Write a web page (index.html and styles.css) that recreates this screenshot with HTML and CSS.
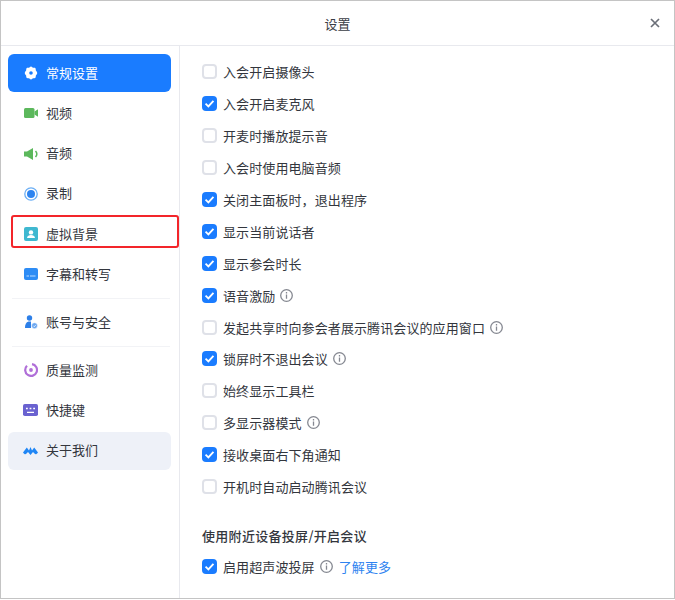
FILE: index.html
```html
<!DOCTYPE html>
<html lang="zh">
<head>
<meta charset="utf-8">
<title>设置</title>
<link rel="stylesheet" href="styles.css">
</head>
<body>
<div class="window">
  <header class="titlebar">
    <span class="title">设置</span>
    <svg class="close" viewBox="0 0 10 10" width="10" height="10"><path d="M1 1L9 9M9 1L1 9" stroke="#6b6f78" stroke-width="1.7" fill="none"/></svg>
  </header>
  <div class="main">
    <nav class="sidebar">
      <div class="nav active">
        <svg class="ico" viewBox="0 0 14 14"><path fill="#fff" fill-rule="evenodd" d="M7 .6c1 0 1.300 1 2 1.200.8.200 1.800-.3 2.400.4.600.6.200 1.500.5 2.200.3.700 1.300 1.100 1.300 2.600s-1 1.900-1.300 2.600c-.3.700.1 1.600-.5 2.200-.6.700-1.600.2-2.400.4-.7.200-1 1.200-2 1.200s-1.300-1-2-1.200c-.8-.2-1.800.3-2.400-.4-.6-.6-.2-1.500-.5-2.200C1.800 8.900.8 8.500.8 7s1-1.900 1.300-2.600c.3-.7-.1-1.600.5-2.200.6-.7 1.600-.2 2.400-.4.700-.2 1-1.200 2-1.200zM7 5.200a1.800 1.800 0 100 3.600 1.800 1.800 0 000-3.600z"/></svg>
        <span>常规设置</span>
      </div>
      <div class="nav">
        <svg class="ico" viewBox="0 0 14 14"><rect x="0" y="2" width="10.500" height="10" rx="1.500" fill="#5cb85c"/><path d="M10.500 5.500L14 3.200v7.600L10.500 8.500z" fill="#5cb85c"/></svg>
        <span>视频</span>
      </div>
      <div class="nav">
        <svg class="ico" viewBox="0 0 14 14"><path d="M0 4.500h3L9 1v12L3 9.500H0z" fill="#5cb85c"/><path d="M11.500 4a4.500 4.500 0 010 6" stroke="#5cb85c" stroke-width="1.500" fill="none"/></svg>
        <span>音频</span>
      </div>
      <div class="nav">
        <svg class="ico" viewBox="0 0 14 14"><circle cx="7" cy="7" r="6.200" fill="none" stroke="#6aaef5" stroke-width="1.300"/><circle cx="7" cy="7" r="4" fill="#2d84f0"/></svg>
        <span>录制</span>
      </div>
      <div class="nav marked">
        <svg class="ico" viewBox="0 0 14 14"><rect width="14" height="14" rx="2" fill="#3fb8d0"/><circle cx="7" cy="5.400" r="2.200" fill="#fff"/><path d="M3 11c.3-2.200 2-3 4-3s3.700.8 4 3z" fill="#fff"/></svg>
        <span>虚拟背景</span>
      </div>
      <div class="nav">
        <svg class="ico" viewBox="0 0 14 14"><rect y="1" width="14" height="12" rx="2" fill="#2d8cf5"/><path d="M2.500 9h2.500M6 9h5.500" stroke="#bcdcff" stroke-width="1.200"/></svg>
        <span>字幕和转写</span>
      </div>
      <div class="divider"></div>
      <div class="nav">
        <svg class="ico" viewBox="0 0 14 14"><circle cx="5.500" cy="3" r="2.700" fill="#2d7fe8"/><path d="M1 13c0-3.500 1-6 3.500-6.500h2.500V13z" fill="#2d7fe8"/><circle cx="10.500" cy="10.700" r="3" fill="#6aa6f0" stroke="#fff" stroke-width=".6"/><path d="M9.300 10.700l1 1 1.400-1.600" stroke="#fff" stroke-width=".8" fill="none"/></svg>
        <span>账号与安全</span>
      </div>
      <div class="divider"></div>
      <div class="nav">
        <svg class="ico" viewBox="0 0 14 14"><path d="M8 1.200A5.900 5.900 0 113 2.800" fill="none" stroke="#b06fd8" stroke-width="2.200"/><circle cx="7" cy="7" r="1.900" fill="#b06fd8"/></svg>
        <span>质量监测</span>
      </div>
      <div class="nav">
        <svg class="ico wide" viewBox="0 0 15 12"><rect width="15" height="12" rx="1.800" fill="#6a62d0"/><path d="M3 4.500h1.800M6.600 4.500h1.800M10.200 4.500h1.800M4 8.300h7" stroke="#fff" stroke-width="1.300"/></svg>
        <span>快捷键</span>
      </div>
      <div class="nav about">
        <svg class="ico wide" viewBox="0 0 15 12"><path d="M0 7.500L3.800 2.500 6 5.500 7.500 2 9 5.500 11.200 2.500 15 7.500C13.500 9.500 12.500 9.800 11.500 8.500L10 7 7.500 10 5 7 3.500 8.500C2.500 9.800 1.500 9.500 0 7.500z" fill="#1f86f5"/></svg>
        <span>关于我们</span>
      </div>
    </nav>
    <section class="content">
      <label class="row"><i class="box"></i><span>入会开启摄像头</span></label>
      <label class="row"><i class="box on"><svg viewBox="0 0 16 16"><path d="M3.800 8.200l3 2.800 5.400-5.800"/></svg></i><span>入会开启麦克风</span></label>
      <label class="row"><i class="box"></i><span>开麦时播放提示音</span></label>
      <label class="row"><i class="box"></i><span>入会时使用电脑音频</span></label>
      <label class="row"><i class="box on"><svg viewBox="0 0 16 16"><path d="M3.800 8.200l3 2.800 5.400-5.800"/></svg></i><span>关闭主面板时，退出程序</span></label>
      <label class="row"><i class="box on"><svg viewBox="0 0 16 16"><path d="M3.800 8.200l3 2.800 5.400-5.800"/></svg></i><span>显示当前说话者</span></label>
      <label class="row"><i class="box on"><svg viewBox="0 0 16 16"><path d="M3.800 8.200l3 2.800 5.400-5.800"/></svg></i><span>显示参会时长</span></label>
      <label class="row"><i class="box on"><svg viewBox="0 0 16 16"><path d="M3.800 8.200l3 2.800 5.400-5.800"/></svg></i><span>语音激励</span><svg class="info" viewBox="0 0 13 13"><circle cx="6.500" cy="6.500" r="5.800"/><path d="M6.500 5.500v4.200M6.500 3v1.400"/></svg></label>
      <label class="row"><i class="box"></i><span>发起共享时向参会者展示腾讯会议的应用窗口</span><svg class="info" viewBox="0 0 13 13"><circle cx="6.500" cy="6.500" r="5.800"/><path d="M6.500 5.500v4.200M6.500 3v1.400"/></svg></label>
      <label class="row"><i class="box on"><svg viewBox="0 0 16 16"><path d="M3.800 8.200l3 2.800 5.400-5.800"/></svg></i><span>锁屏时不退出会议</span><svg class="info" viewBox="0 0 13 13"><circle cx="6.500" cy="6.500" r="5.800"/><path d="M6.500 5.500v4.200M6.500 3v1.400"/></svg></label>
      <label class="row"><i class="box"></i><span>始终显示工具栏</span></label>
      <label class="row"><i class="box"></i><span>多显示器模式</span><svg class="info" viewBox="0 0 13 13"><circle cx="6.500" cy="6.500" r="5.800"/><path d="M6.500 5.500v4.200M6.500 3v1.400"/></svg></label>
      <label class="row"><i class="box on"><svg viewBox="0 0 16 16"><path d="M3.800 8.200l3 2.800 5.400-5.800"/></svg></i><span>接收桌面右下角通知</span></label>
      <label class="row"><i class="box"></i><span>开机时自动启动腾讯会议</span></label>
      <h2 class="heading">使用附近设备投屏/开启会议</h2>
      <label class="row"><i class="box on"><svg viewBox="0 0 16 16"><path d="M3.800 8.200l3 2.800 5.400-5.800"/></svg></i><span>启用超声波投屏</span><svg class="info" viewBox="0 0 13 13"><circle cx="6.500" cy="6.500" r="5.800"/><path d="M6.500 5.500v4.200M6.500 3v1.400"/></svg><a class="more">了解更多</a></label>
    </section>
  </div>
</div>
</body>
</html>
```
FILE: styles.css
```css
*, *::after { box-sizing: border-box; }
html, body { margin: 0; padding: 0; background: #fff; }
body {
  width: 675px;
  height: 600px;
  overflow: hidden;
  font-family: "Noto Sans CJK SC", "Liberation Sans", sans-serif;
  font-size: 13px;
  color: #33363d;
}
.window {
  width: 675px;
  height: 599px;
  border: 1px solid #c4c4c4;
  display: flex;
  flex-direction: column;
  background: #fff;
}
.titlebar {
  height: 45px;
  flex: none;
  border-bottom: 1px solid #e8e9ee;
  display: flex;
  align-items: center;
  justify-content: center;
  position: relative;
}
.title { font-size: 13px; color: #3a3d44; }
.close { position: absolute; right: 14px; top: 17px; }
.main { flex: 1; display: flex; min-height: 0; }
.sidebar {
  width: 179px;
  flex: none;
  border-right: 1px solid #e8e9ee;
  padding: 8px 7px 0 7px;
  display: flex;
  flex-direction: column;
}
.nav {
  height: 38px;
  margin-bottom: 2.300px;
  border-radius: 6px;
  display: flex;
  align-items: center;
  padding-left: 16px;
  width: 163px;
  flex: none;
  position: relative;
}
.nav span { padding-bottom: 2px; margin-left: 8px; }
.ico { width: 14px; height: 14px; flex: none; }
.ico.wide { width: 15px; height: 12px; margin-left: -1px; }
.active { background: #1a7cff; color: #fff; }
.marked::after {
  content: "";
  position: absolute;
  left: 3px;
  top: 0;
  width: 168px;
  height: 33px;
  border: 2.500px solid #f3252a;
  border-radius: 3px;
}
.about { background: #eef1f8; }
.divider {
  height: 1px;
  width: 158px;
  flex: none;
  background: #f2f3f6;
  margin: 2.500px 0 4px 4px;
}
.content { flex: 1; padding: 10px 0 0 22px; }
.row {
  height: 31.900px;
  display: flex;
  align-items: center;
  white-space: nowrap;
  letter-spacing: .1px;
}
.box {
  width: 15px;
  height: 15px;
  border: 2px solid #dfe1e8;
  border-radius: 4px;
  margin-right: 6px;
  flex: none;
  background: #fff;
  display: block;
}
.box.on { background: #1a7cff; border: 0; }
.box svg { display: block; width: 15px; height: 15px; fill: none; stroke: #fff; stroke-width: 2; }
.info { width: 13px; height: 13px; margin-left: 5px; flex: none; fill: none; stroke: #858891; stroke-width: 1.300; }
.heading {
  font-size: 13px;
  font-weight: 500;
  letter-spacing: .3px;
  margin: 0;
  color: #33363d;
  padding-top: 24px;
  height: 48.500px;
  line-height: 20px;
}
.more { color: #2e83f0; margin-left: 6px; }
```
